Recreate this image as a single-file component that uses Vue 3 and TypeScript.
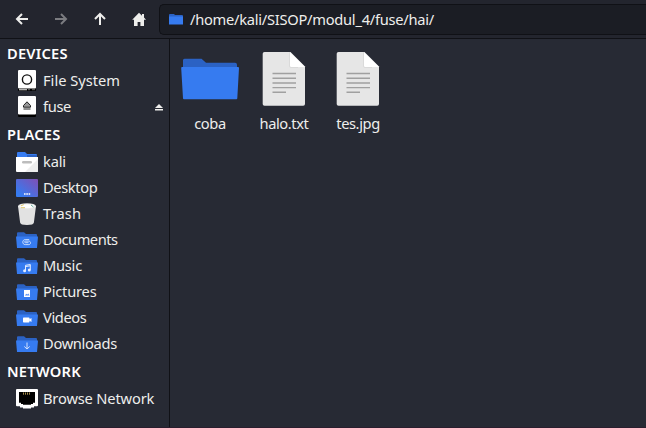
<script setup lang="ts">
interface Place {
  label: string
  icon: string
  track: number
  eject?: boolean
}
interface Section {
  title: string
  items: Place[]
}
const sections: Section[] = [
  {
    title: 'DEVICES',
    items: [
      { label: 'File System', icon: 'drive', track: 0 },
      { label: 'fuse', icon: 'removable', track: -0.35, eject: true },
    ],
  },
  {
    title: 'PLACES',
    items: [
      { label: 'kali', icon: 'home', track: -0.2 },
      { label: 'Desktop', icon: 'desktop', track: -0.38 },
      { label: 'Trash', icon: 'trash', track: 0.15 },
      { label: 'Documents', icon: 'documents', track: -0.5 },
      { label: 'Music', icon: 'music', track: -0.25 },
      { label: 'Pictures', icon: 'pictures', track: -0.2 },
      { label: 'Videos', icon: 'videos', track: -0.38 },
      { label: 'Downloads', icon: 'downloads', track: -0.32 },
    ],
  },
  { title: 'NETWORK', items: [{ label: 'Browse Network', icon: 'network', track: -0.16 }] },
]
const folderIcons = ['documents', 'music', 'pictures', 'videos', 'downloads']
const files = [
  { name: 'coba', folder: true },
  { name: 'halo.txt', folder: false },
  { name: 'tes.jpg', folder: false },
]
</script>

<template>
  <div class="window">
    <header class="toolbar">
      <button class="nav" aria-label="Back">
        <svg width="16" height="16" viewBox="0 0 16 16"><path d="M14 8H3.5M8 3L3 8l5 5" class="arrow" /></svg>
      </button>
      <button class="nav disabled" aria-label="Forward">
        <svg width="16" height="16" viewBox="0 0 16 16"><path d="M2 8h10.5M8 3l5 5-5 5" class="arrow" /></svg>
      </button>
      <button class="nav" aria-label="Up">
        <svg width="16" height="16" viewBox="0 0 16 16"><path d="M8 14V3.5M3 8l5-5 5 5" class="arrow" /></svg>
      </button>
      <button class="nav" aria-label="Home">
        <svg width="16" height="16" viewBox="0 0 16 16"><path d="M8 1.8L1.200 8.800H3V15h3.600v-4h2.800v4H13V8.800h2L13 6.600V3h-2v1.700z" fill="#eeeeec" /></svg>
      </button>
      <div class="path">
        <svg width="14" height="11" viewBox="0 0 14 11">
          <path d="M0 1q0-1 1-1h4l1 1h7q1 0 1 1v2H0z" fill="#2b62c4" />
          <path d="M0 2.500h14v8H0z" fill="#367bf0" />
        </svg>
        <span class="pathtext">/home/kali/SISOP/modul_4/fuse/hai/</span>
      </div>
    </header>
    <div class="body">
      <aside class="sidebar">
        <section v-for="s in sections" :key="s.title">
          <h2>{{ s.title }}</h2>
          <div v-for="p in s.items" :key="p.label" class="row">
            <svg class="icon" width="24" height="24" viewBox="0 0 24 24">
              <template v-if="p.icon === 'drive' || p.icon === 'removable'">
                <rect x="3" y="1" width="18" height="21" rx="1" fill="#000" />
                <rect x="3" y="1" width="18" height="18.5" rx="1" fill="#fff" />
                <template v-if="p.icon === 'drive'">
                  <circle cx="12" cy="10.5" r="4.6" fill="none" stroke="#111" stroke-width="1.4" />
                  <path d="M4 20.7h8" stroke="#bbb" stroke-width="1.3" />
                  <path d="M13 20.7h2M17 20.7h3" stroke="#555" stroke-width="1.3" />
                </template>
                <path v-else d="M8.5 12.2v-1.7L12 6.8l3.500 3.700v1.700zM8.500 14h7" fill="#999" stroke="#222" />
              </template>
              <template v-else-if="p.icon === 'home'">
                <path d="M2 3q0-1 1-1h7l2 2h9q1 0 1 1v3H2z" fill="#367bf0" />
                <path d="M12 5h10v3H12z" fill="#2b62c4" />
                <path d="M1 7h22v14q0 1-1 1H2q-1 0-1-1z" fill="#fff" />
                <path d="M23 9v12q0 1-1 1H10z" fill="#ededed" />
                <rect x="7" y="11" width="10" height="2.4" rx="1.2" fill="#bdbdbd" />
              </template>
              <template v-else-if="p.icon === 'desktop'">
                <defs>
                  <linearGradient id="desk" x1="0" y1="1" x2="1" y2="0">
                    <stop offset="0.150" stop-color="#367bf0" />
                    <stop offset="1" stop-color="#804fb5" />
                  </linearGradient>
                </defs>
                <rect x="1" y="3" width="22" height="18" rx="1" fill="url(#desk)" />
                <path d="M9 18h1.600M11.300 18h1.600M13.600 18h1.600" stroke="#fff" stroke-width="1.5" />
              </template>
              <template v-else-if="p.icon === 'trash'">
                <path d="M3 4l2.100 16.500Q5.300 23 12 23t6.900-2.500L21 4z" fill="#e2e2e2" />
                <ellipse cx="12" cy="4.2" rx="9" ry="3" fill="#e8e8e8" />
                <ellipse cx="12" cy="4.2" rx="7.4" ry="2" fill="#fff" />
                <path d="M5.800 3.900l3-1.300M6 5.700h4" stroke="#e2c96f" />
                <path d="M16 3l2.500 2" stroke="#65a99d" />
              </template>
              <template v-else-if="folderIcons.includes(p.icon)">
                <path d="M2 5.300q0-1 1-1h6l2 1.700h10q1 0 1 1v4H2z" fill="#2b62c4" />
                <path d="M1 8.500h22L22 20H2z" fill="#367bf0" />
                <g v-if="p.icon === 'documents'" fill="none" stroke="#d7e5ff" stroke-width=".9">
                  <path d="M13.500 14.700h-3c-1.200 0-1.200-1.600 0-1.600h3.300c2.300 0 2.300 3.500 0 3.500h-3.600c-3.200 0-3.200-5 0-5h4" />
                </g>
                <g v-else-if="p.icon === 'music'">
                  <path d="M10.500 16.700v-5.400l4.800-.8v5.300M10.500 12.600l4.800-.8" fill="none" stroke="#e4edff" />
                  <circle cx="9.600" cy="16.700" r="1.500" fill="#e4edff" />
                  <circle cx="14.300" cy="16" r="1.500" fill="#e4edff" />
                </g>
                <g v-else-if="p.icon === 'pictures'">
                  <rect x="9" y="10" width="6" height="7" fill="#fff" />
                  <path d="M9.800 15.500l1.500-1.800 1.100.8 1-1.100 1.200 2.100z" fill="#5a91f1" />
                </g>
                <g v-else-if="p.icon === 'videos'" fill="#fff">
                  <rect x="8" y="11.5" width="6.500" height="5" rx=".7" />
                  <path d="M14 13.500l2.500-1.500v4L14 14.600z" />
                </g>
                <path v-else d="M12 10.500v6.500M9.300 14.500L12 17l2.700-2.500" fill="none" stroke="#d3e2ff" />
              </template>
              <template v-else>
                <path d="M2 2h20q1 0 1 1v15.300q0 1-1 1h-3v1.200h-3v1H8v-1H5v-1.200H2q-1 0-1-1V3q0-1 1-1z" fill="#fff" />
                <path d="M4 5h16v10.700h-2v1.300h-2v.7H8V17H6v-1.300H4z" fill="#000" />
                <path d="M8.500 5.500v2.200M10.500 5.500v2.200M12.500 5.500v2.200M14.500 5.500v2.200" stroke="#a58c4c" />
              </template>
            </svg>
            <span class="label" :style="{ letterSpacing: p.track + 'px' }">{{ p.label }}</span>
            <svg v-if="p.eject" class="eject" width="8" height="7" viewBox="0 0 8 7">
              <path d="M4 0l4 4H0zM0 5h8v1.600H0z" fill="#eeeeec" />
            </svg>
          </div>
        </section>
      </aside>
      <main class="files">
        <div v-for="f in files" :key="f.name" class="file">
          <svg v-if="f.folder" width="64" height="64" viewBox="0 0 64 64">
            <path d="M5 13.300q0-1.500 1.500-1.500h17L28 15.800h29q2 0 2 2V30H5z" fill="#2b62c4" />
            <path d="M4 20h56q1 0 1 1L59.300 51.200q0 1-1 1H6q-1 0-1-1L3.200 21q0-1 .8-1z" fill="#367bf0" />
          </svg>
          <svg v-else width="64" height="64" viewBox="0 0 64 64">
            <path d="M12.500 5H38.500L53 19.500V57q0 1.800-1.800 1.800H12.500q-1.800 0-1.800-1.800V6.800Q10.700 5 12.500 5z" fill="#e6e6e6" />
            <path d="M38 5.200V19q0 1 1 1h14z" fill="#fff" />
            <path d="M37.500 5v14q0 1.500 1.500 1.500h7" fill="none" stroke="#d2d2d2" stroke-width=".6" />
            <path d="M20.500 26.500H44M20.500 31.300H44M20.500 36H44M20.500 40.600H44M20.500 45.300H34" stroke="#a0a0a0" stroke-width="1.400" />
          </svg>
          <span>{{ f.name }}</span>
        </div>
      </main>
    </div>
  </div>
</template>

<style>
body {
  margin: 0;
  background: #272a34;
}
</style>
<style scoped>
.window {
  width: 646px;
  height: 428px;
  box-sizing: border-box;
  border-bottom: 1px solid #2a1e2e;
  display: flex;
  flex-direction: column;
  overflow: hidden;
  background: #272a34;
  color: #eeeeec;
  font: 14.67px/20px "Noto Sans", sans-serif;
}
.toolbar {
  height: 38px;
  flex: none;
  display: flex;
  align-items: center;
  background: #23252e;
  border-bottom: 1px solid #101116;
  padding-left: 2px;
}
.nav {
  width: 39px;
  height: 38px;
  padding: 0;
  border: 0;
  background: none;
  display: flex;
  align-items: center;
  justify-content: center;
  color: #eeeeec;
}
.nav.disabled {
  color: #7b7c80;
}
.arrow {
  fill: none;
  stroke: currentColor;
  stroke-width: 2;
}
.path {
  flex: 1;
  height: 31px;
  box-sizing: border-box;
  margin: 1px 0 0 1px;
  border: 1px solid #101116;
  border-right: 0;
  border-radius: 5px 0 0 5px;
  background: #1b1d24;
  display: flex;
  align-items: center;
  padding-left: 9px;
  gap: 7px;
}
.pathtext {
  padding-bottom: 2px;
  letter-spacing: -0.26px;
}
.body {
  flex: 1;
  display: flex;
  min-height: 0;
}
.sidebar {
  width: 169px;
  flex: none;
  border-right: 1px solid #101116;
}
h2 {
  margin: 0;
  height: 29px;
  padding-left: 7px;
  font-size: 14.67px;
  line-height: 29px;
  font-weight: 600;
  letter-spacing: 0.22px;
  color: #fff;
}
.row {
  height: 26px;
  display: flex;
  align-items: center;
  padding: 0 6px 0 15px;
  white-space: nowrap;
}
.icon {
  margin-right: 4px;
  flex: none;
}
.label {
  padding-bottom: 2px;
}
.eject {
  margin-left: auto;
}
.files {
  display: flex;
  padding: 8px 0 0 3px;
}
.file {
  width: 74px;
  display: flex;
  flex-direction: column;
  align-items: center;
  gap: 2px;
  letter-spacing: -0.4px;
}
</style>
